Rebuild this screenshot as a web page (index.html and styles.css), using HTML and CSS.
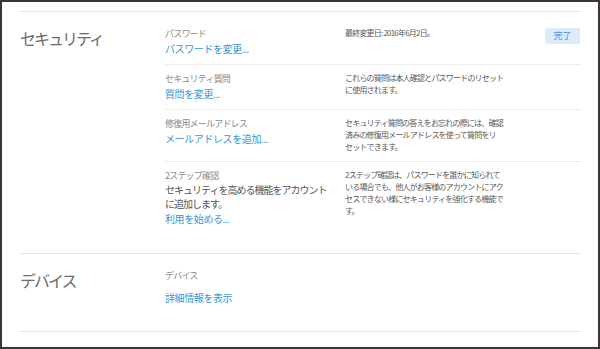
FILE: index.html
```html
<!DOCTYPE html>
<html lang="ja">
<head>
    <meta charset="UTF-8">
    <meta name="viewport" content="width=device-width, initial-scale=1.0">
    <title>セキュリティ</title>
    <link rel="stylesheet" href="styles.css">
</head>
<body>
    <div class="frame">
        <!-- セキュリティ -->
        <div class="section">
            <h2 class="section-title">セキュリティ</h2>
            <div class="rows">
                <div class="row">
                    <div class="field">
                        <div class="label">パスワード</div>
                        <a class="link" href="#">パスワードを変更...</a>
                    </div>
                    <div class="desc">最終変更日: 2016年6月2日。</div>
                    <div class="status"><span class="badge">完了</span></div>
                </div>
                <div class="row">
                    <div class="field">
                        <div class="label">セキュリティ質問</div>
                        <a class="link" href="#">質問を変更...</a>
                    </div>
                    <div class="desc">これらの質問は本人確認とパスワードのリセット<br>に使用されます。</div>
                    <div class="status"></div>
                </div>
                <div class="row">
                    <div class="field">
                        <div class="label">修復用メールアドレス</div>
                        <a class="link" href="#">メールアドレスを追加...</a>
                    </div>
                    <div class="desc">セキュリティ質問の答えをお忘れの際には、確認<br>済みの修復用メールアドレスを使って質問をリ<br>セットできます。</div>
                    <div class="status"></div>
                </div>
                <div class="row">
                    <div class="field">
                        <div class="label">2ステップ確認</div>
                        <div class="text">セキュリティを高める機能をアカウント<br>に追加します。</div>
                        <a class="link" href="#">利用を始める...</a>
                    </div>
                    <div class="desc">2ステップ確認は、パスワードを誰かに知られて<br>いる場合でも、他人がお客様のアカウントにアク<br>セスできない様にセキュリティを強化する機能で<br>す。</div>
                    <div class="status"></div>
                </div>
            </div>
        </div>

        <!-- デバイス -->
        <div class="section last">
            <h2 class="section-title">デバイス</h2>
            <div class="rows">
                <div class="row">
                    <div class="field spaced">
                        <div class="label">デバイス</div>
                        <a class="link" href="#">詳細情報を表示</a>
                    </div>
                    <div class="desc"></div>
                    <div class="status"></div>
                </div>
            </div>
        </div>
    </div>
</body>
</html>
```

FILE: styles.css
```css
html, body {
    margin: 0;
    padding: 0;
    background: #fff;
}

body {
    font-family: "Noto Sans CJK JP", "Noto Sans", sans-serif;
    color: #444;
}

.frame {
    box-sizing: border-box;
    height: 349px;
    border: 2px solid #3a3536;
    padding: 9px 17px 0 18px;
}

.section {
    display: grid;
    grid-template-columns: 145px 1fr;
    border-top: 1px solid #e6e6e6;
    padding: 8px 0 19px;
}

.section.last {
    border-bottom: 1px solid #e6e6e6;
    padding-bottom: 18px;
}

.section-title {
    margin: 7px 0 0;
    font-size: 16px;
    line-height: 22px;
    font-weight: normal;
    letter-spacing: -2px;
    color: #6b6b6b;
}

.row {
    display: grid;
    grid-template-columns: 180px 1fr auto;
    padding: 7px 0 8px;
    border-top: 1px solid #ededed;
}

.row:first-child {
    border-top: none;
}

.field {
    display: flex;
    flex-direction: column;
    align-items: flex-start;
}

.field.spaced .label {
    margin-bottom: 7px;
}

.label {
    font-size: 9px;
    line-height: 14px;
    letter-spacing: -0.8px;
    color: #8a8a8a;
}

.link {
    font-size: 10px;
    line-height: 15px;
    letter-spacing: -0.4px;
    color: #3a95d4;
    text-decoration: none;
}

.text {
    font-size: 10px;
    line-height: 14px;
    letter-spacing: -1px;
    color: #555;
}

.desc {
    font-size: 8px;
    line-height: 12px;
    letter-spacing: -0.8px;
    color: #5a5a5a;
}

.status {
    display: flex;
    align-items: flex-start;
}

.badge {
    display: block;
    width: 35px;
    height: 16px;
    margin-top: 1px;
    margin-right: 1px;
    border-radius: 3px;
    background: #dceafb;
    color: #4a90df;
    font-size: 9px;
    line-height: 16px;
    text-align: center;
}
```
